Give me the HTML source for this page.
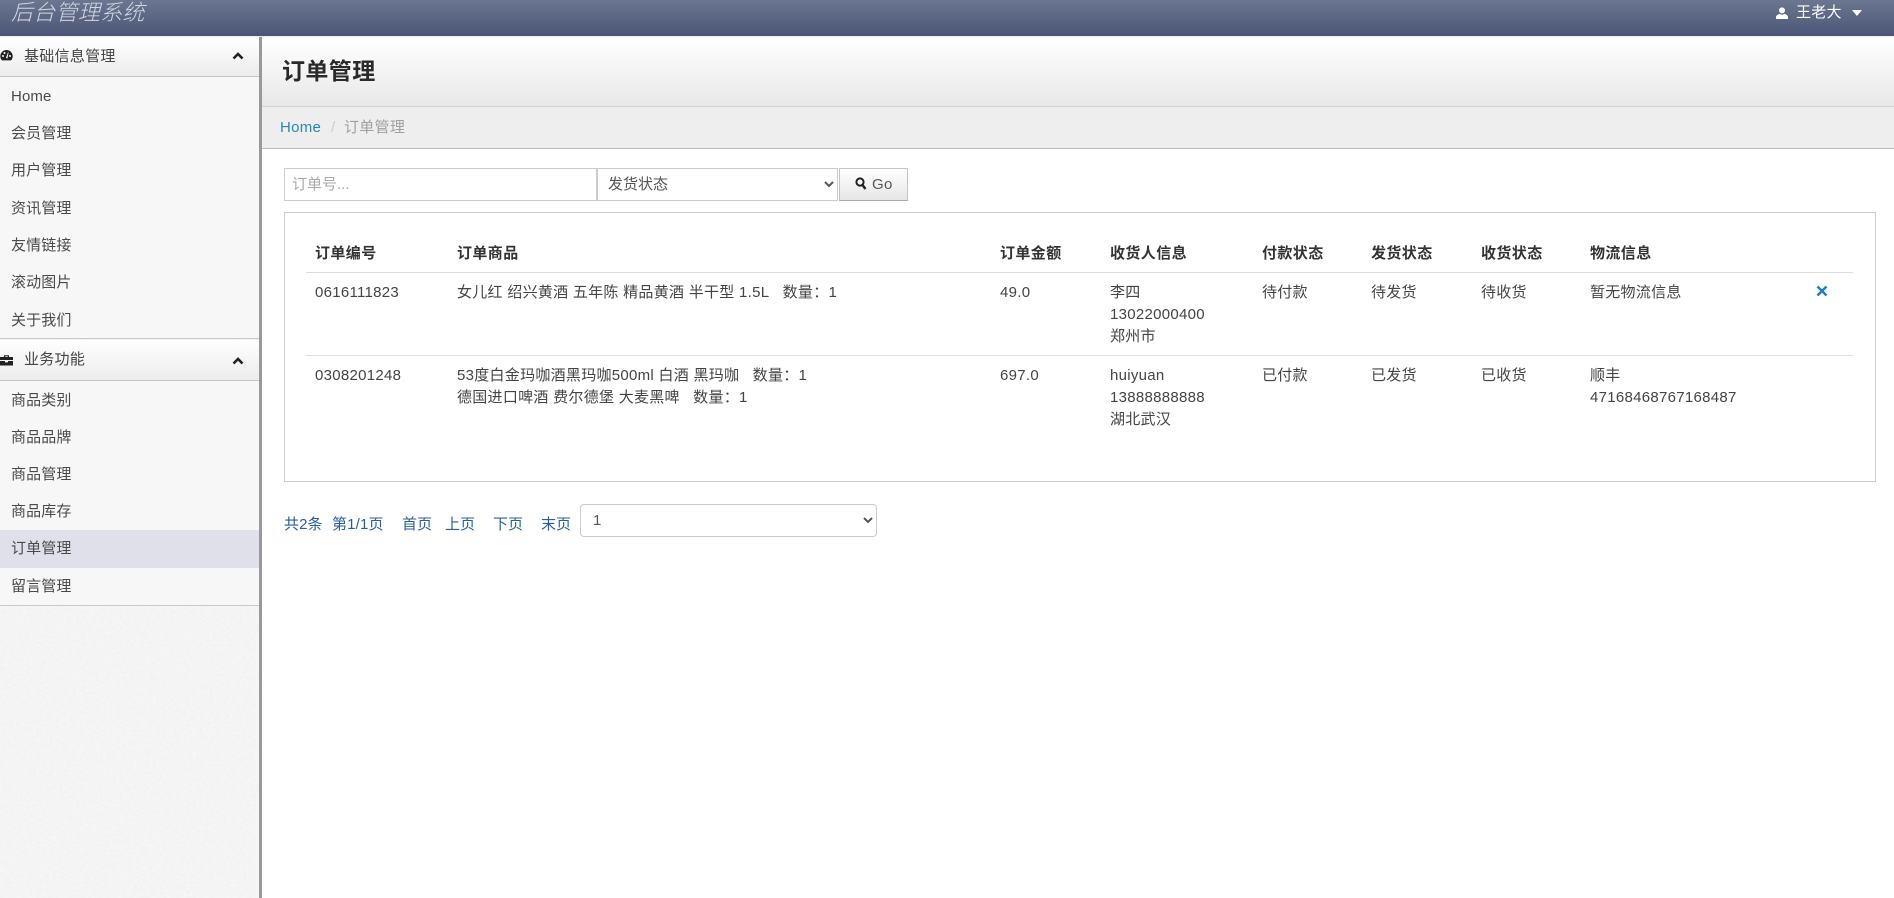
<!DOCTYPE html>
<html lang="zh">
<head>
<meta charset="utf-8">
<title>订单管理</title>
<style>
*{box-sizing:border-box}
html,body{margin:0;padding:0;width:1894px;height:898px;overflow:hidden;background:#fff}
body{position:relative;font-family:"Liberation Sans","Noto Sans CJK SC",sans-serif;font-size:15px;color:#444}
.a{position:absolute}
.t{position:absolute;white-space:nowrap;line-height:22px;height:22px;letter-spacing:.28px}
.h{font-weight:bold;color:#333;letter-spacing:.4px}
.m{left:11px;color:#4a4a4a;letter-spacing:.12px}
.p{color:#2a5d9f;letter-spacing:.15px}
.sec{position:absolute;left:0;width:259px;background:linear-gradient(#fff,#ececec);border-bottom:1px solid #c4c4c4}
select,input,button{font-family:"Liberation Sans","Noto Sans CJK SC",sans-serif;font-size:15px;margin:0}
input::placeholder{color:#aaa}
</style>
</head>
<body>
<!-- top bar -->
<div class="a" style="left:0;top:0;width:1894px;height:36px;background:linear-gradient(#6b7691,#4b5677)"></div>
<div class="a" style="left:0;top:36px;width:1894px;height:1px;background:#e9ecf0"></div>
<div class="t" style="left:11px;top:0;font-size:22px;font-style:italic;color:#d3d6df;font-weight:300;line-height:26px;height:26px">后台管理系统</div>
<svg class="a" style="left:1776px;top:7px" width="12" height="12" viewBox="0 0 12 12"><circle cx="6" cy="3.4" r="3" fill="#fff"/><path d="M0 12V10.2C0 8.4 2 7.4 3.8 6.8L6 8L8.2 6.8C10 7.4 12 8.4 12 10.2V12Z" fill="#fff"/></svg>
<div class="t" style="left:1796px;top:2px;color:#fff">王老大</div>
<svg class="a" style="left:1852px;top:10px" width="10" height="6" viewBox="0 0 10 6"><path d="M0 0H10L5 6Z" fill="#fff"/></svg>

<!-- sidebar -->
<svg class="a" style="left:0;top:37px" width="259" height="861">
<defs><filter id="n" x="0" y="0" width="100%" height="100%"><feTurbulence type="fractalNoise" baseFrequency="0.3 0.4" numOctaves="2" seed="4"/><feColorMatrix values="0 0 0 0 0.5 0 0 0 0 0.5 0 0 0 0 0.5 0.14 0 0 0 -0.04"/></filter></defs>
<rect width="259" height="861" fill="#f6f6f6"/><rect width="259" height="861" filter="url(#n)"/>
</svg>
<div class="a" style="left:259px;top:37px;width:3px;height:861px;background:#999"></div>
<div class="a" style="left:0;top:77px;width:259px;height:262px;background:#f7f7f7;border-bottom:1px solid #c9c9c9"></div>
<div class="a" style="left:0;top:381px;width:259px;height:225px;background:#f7f7f7;border-bottom:1px solid #c9c9c9"></div>
<div class="a" style="left:0;top:530px;width:259px;height:38px;background:#e0e0ea"></div>

<div class="sec" style="top:37px;height:40px"></div>
<svg class="a" style="left:0;top:49px" width="13" height="13" viewBox="0 0 13 13"><path d="M6.5 1A6.2 6.2 0 0 0 .3 7.2C.3 9 1 10.4 2 11.4H11C12 10.4 12.7 9 12.7 7.2A6.2 6.2 0 0 0 6.5 1Z" fill="#222"/><circle cx="3" cy="7" r="1" fill="#fff"/><circle cx="4.5" cy="4" r="1" fill="#fff"/><circle cx="10" cy="7" r="1" fill="#fff"/><path d="M6 9L8 3.2L8.6 3.5L7.4 9.5Z" fill="#fff"/></svg>
<div class="t" style="left:24px;top:46px;color:#444">基础信息管理</div>
<svg class="a" style="left:232px;top:51px" width="12" height="9" viewBox="0 0 12 9"><path d="M1.5 7.5L6 3L10.5 7.5" fill="none" stroke="#222" stroke-width="2.6"/></svg>
<div class="t m" style="top:86px">Home</div>
<div class="t m" style="top:123px">会员管理</div>
<div class="t m" style="top:160px">用户管理</div>
<div class="t m" style="top:198px">资讯管理</div>
<div class="t m" style="top:235px">友情链接</div>
<div class="t m" style="top:272px">滚动图片</div>
<div class="t m" style="top:310px">关于我们</div>

<div class="sec" style="top:340px;height:41px"></div>
<svg class="a" style="left:0;top:354px" width="13" height="12" viewBox="0 0 13 12"><path d="M4 3V1.2H9V3H13V6H0V3ZM5.2 3H7.8V2.2H5.2ZM0 7H5V8.4H8V7H13V11.5H0Z" fill="#222"/></svg>
<div class="t" style="left:24px;top:349px;color:#444">业务功能</div>
<svg class="a" style="left:232px;top:356px" width="12" height="9" viewBox="0 0 12 9"><path d="M1.5 7.5L6 3L10.5 7.5" fill="none" stroke="#222" stroke-width="2.6"/></svg>
<div class="t m" style="top:390px">商品类别</div>
<div class="t m" style="top:427px">商品品牌</div>
<div class="t m" style="top:464px">商品管理</div>
<div class="t m" style="top:501px">商品库存</div>
<div class="t m" style="top:538px">订单管理</div>
<div class="t m" style="top:576px">留言管理</div>

<!-- page title -->
<div class="a" style="left:262px;top:37px;width:1632px;height:70px;background:linear-gradient(#fff,#e8e8e8);border-bottom:1px solid #d2d2d2"></div>
<div class="t" style="left:282px;top:54px;font-size:23px;font-weight:bold;color:#2a2a2a;line-height:34px;height:34px;letter-spacing:.4px">订单管理</div>
<div class="a" style="left:262px;top:107px;width:1632px;height:42px;background:#eee;border-bottom:1px solid #bbb"></div>
<div class="t" style="left:280px;top:117px;color:#2a86b8">Home</div>
<div class="t" style="left:331px;top:117px;color:#ccc">/</div>
<div class="t" style="left:344px;top:117px;color:#a0a0a0">订单管理</div>

<!-- search -->
<input class="a" placeholder="订单号..." style="left:284px;top:168px;width:313px;height:33px;border:1px solid #ccc;padding:0 7px;background:#fff;outline:0">
<select class="a" style="left:597px;top:168px;width:241px;height:33px;border:1px solid #ccc;background:#fff;color:#555;padding:0 6px;border-radius:0"><option>发货状态</option></select>
<div class="a" style="left:839px;top:168px;width:69px;height:33px;background:linear-gradient(#fff,#e6e6e6);border:1px solid #c4c4c4;border-bottom-color:#aaa"></div>
<svg class="a" style="left:855px;top:177px" width="12" height="13" viewBox="0 0 12 13"><circle cx="5" cy="5" r="3.6" fill="none" stroke="#222" stroke-width="2"/><path d="M7.5 8L10.5 12" stroke="#222" stroke-width="2.4"/></svg>
<div class="t" style="left:872px;top:174px;color:#555">Go</div>

<!-- panel + table -->
<div class="a" style="left:284px;top:212px;width:1592px;height:270px;border:1px solid #ccc;background:#fff"></div>
<div class="a" style="left:306px;top:272px;width:1547px;height:1px;background:#ddd"></div>
<div class="a" style="left:306px;top:355px;width:1547px;height:1px;background:#ddd"></div>

<div class="t h" style="left:315px;top:243px">订单编号</div>
<div class="t h" style="left:457px;top:243px">订单商品</div>
<div class="t h" style="left:1000px;top:243px">订单金额</div>
<div class="t h" style="left:1110px;top:243px">收货人信息</div>
<div class="t h" style="left:1262px;top:243px">付款状态</div>
<div class="t h" style="left:1371px;top:243px">发货状态</div>
<div class="t h" style="left:1481px;top:243px">收货状态</div>
<div class="t h" style="left:1590px;top:243px">物流信息</div>

<div class="t" style="left:315px;top:282px">0616111823</div>
<div class="t" style="left:457px;top:282px">女儿红 绍兴黄酒 五年陈 精品黄酒 半干型 1.5L&nbsp;&nbsp; 数量：1</div>
<div class="t" style="left:1000px;top:282px">49.0</div>
<div class="t" style="left:1110px;top:282px">李四</div>
<div class="t" style="left:1110px;top:304px">13022000400</div>
<div class="t" style="left:1110px;top:326px">郑州市</div>
<div class="t" style="left:1262px;top:282px">待付款</div>
<div class="t" style="left:1371px;top:282px">待发货</div>
<div class="t" style="left:1481px;top:282px">待收货</div>
<div class="t" style="left:1590px;top:282px">暂无物流信息</div>
<svg class="a" style="left:1816px;top:285px" width="12" height="12" viewBox="0 0 12 12"><path d="M1.5 1.5L10.5 10.5M10.5 1.5L1.5 10.5" stroke="#1a7fc0" stroke-width="2.4"/></svg>

<div class="t" style="left:315px;top:365px">0308201248</div>
<div class="t" style="left:457px;top:365px">53度白金玛咖酒黑玛咖500ml 白酒 黑玛咖&nbsp;&nbsp; 数量：1</div>
<div class="t" style="left:457px;top:387px">德国进口啤酒 费尔德堡 大麦黑啤&nbsp;&nbsp; 数量：1</div>
<div class="t" style="left:1000px;top:365px">697.0</div>
<div class="t" style="left:1110px;top:365px">huiyuan</div>
<div class="t" style="left:1110px;top:387px">13888888888</div>
<div class="t" style="left:1110px;top:409px">湖北武汉</div>
<div class="t" style="left:1262px;top:365px">已付款</div>
<div class="t" style="left:1371px;top:365px">已发货</div>
<div class="t" style="left:1481px;top:365px">已收货</div>
<div class="t" style="left:1590px;top:365px">顺丰</div>
<div class="t" style="left:1590px;top:387px">47168468767168487</div>

<!-- pagination -->
<div class="t p" style="left:284px;top:514px">共2条</div>
<div class="t p" style="left:332px;top:514px">第1/1页</div>
<div class="t p" style="left:402px;top:514px">首页</div>
<div class="t p" style="left:445px;top:514px">上页</div>
<div class="t p" style="left:493px;top:514px">下页</div>
<div class="t p" style="left:541px;top:514px">末页</div>
<select class="a" style="left:580px;top:504px;width:297px;height:33px;border:1px solid #ccc;border-radius:4px;background:#fff;color:#555;padding:0 8px"><option>1</option></select>
</body>
</html>
